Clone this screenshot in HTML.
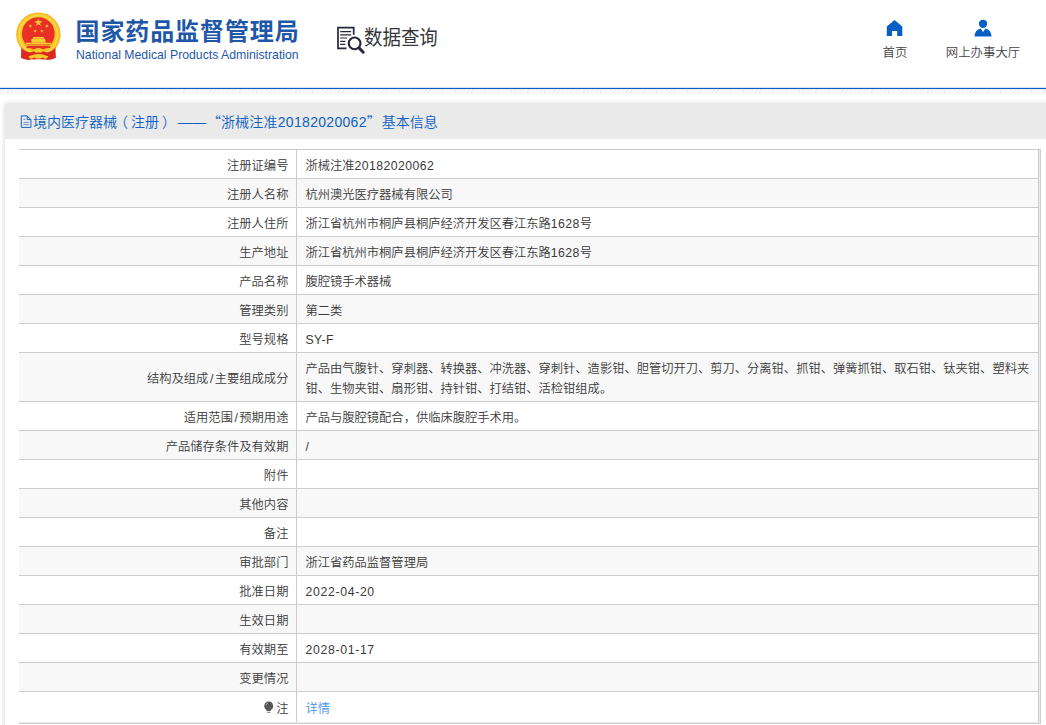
<!DOCTYPE html>
<html lang="zh-CN">
<head>
<meta charset="utf-8">
<title>国家药品监督管理局 数据查询</title>
<style>
*{box-sizing:border-box;margin:0;padding:0}
html,body{width:1046px;height:725px;overflow:hidden;background:#fff}
body{font-family:"Liberation Sans","Noto Sans CJK SC",sans-serif;font-size:12px;color:#333;position:relative}
.hdr{position:absolute;left:0;top:0;width:1046px;height:88px;background:#fff}
.emblem{position:absolute;left:14px;top:11px;width:48px;height:52px}
.cn{position:absolute;left:75.500px;top:13.500px;font-size:24px;line-height:36px;font-weight:700;color:#1f57a8;white-space:nowrap;letter-spacing:.9px}
.en{position:absolute;left:76px;top:47px;font-size:12.250px;line-height:16px;color:#1f57a8;white-space:nowrap}
.sq{position:absolute;left:336px;top:26px;width:30px;height:30px}
.sqt{position:absolute;left:364px;top:23.400px;font-size:20.400px;line-height:30px;color:#36363c;font-weight:400;white-space:nowrap;transform:scaleX(.905);transform-origin:0 0}
.nav{position:absolute;top:45px;font-size:12.4px;line-height:16px;color:#444;font-weight:350;white-space:nowrap;text-align:center}
.ico{position:absolute}
.bline{position:absolute;left:0;top:87px;width:1046px;height:3px;background:linear-gradient(#d3e1f3 0,#d3e1f3 1px,#0d5fbf 1px,#0d5fbf 2px,#e3ecf7 2px)}
.hatch{position:absolute;left:0;top:90px;width:1046px;height:3px;background:repeating-linear-gradient(135deg,#ebebeb 0,#ebebeb 1px,#fff 1px,#fff 3.040px)}
.panel{position:absolute;left:5px;top:104px;width:1060px;height:640px;background:#fff;box-shadow:0 0 5px rgba(0,0,0,.19)}
.ttl{position:absolute;left:0;top:0;width:100%;height:35px;background:#eaeaea;border-bottom:1px solid #e6e8f2;color:#0d5fc4;font-size:14px;font-weight:350;line-height:35px;padding-left:15px;white-space:nowrap}
.ttl .c{font-family:"Noto Sans CJK SC",sans-serif}
.ttl .n{letter-spacing:.3px}
.ttl svg{position:absolute;left:15px;top:10px}
.tw{position:absolute;left:14px;top:45px;width:1022px;height:575px;border-top:1px solid #ccc;border-right:1px solid #ccc;border-bottom:1px solid #ccc;padding:0 1px 1px 0;background:#e9e9f1}
table{width:1020px;border-collapse:separate;border-spacing:0;table-layout:fixed;background:#fff}
td{height:29px;border-right:1px solid #ccc;border-bottom:1px solid #ccc;font-size:12.27px;font-weight:350;line-height:20px;color:#3a3a3a;padding:6px 7px 2px 8.500px;vertical-align:middle;background:#fff}
td.k{width:278px;text-align:right;padding-right:7.600px}
tr:nth-child(even) td{background:#f8f8f8}
tr:last-child td{height:30px;border-bottom:0}
.n{letter-spacing:.42px}
.d{letter-spacing:.66px}
.sl{margin:0 1.500px}
a{color:#4593f0;text-decoration:none}
.bulb{position:absolute;left:245px;top:551px}
</style>
</head>
<body>
<div class="hdr">
  <svg class="emblem" viewBox="14 11 48 52">
<defs><radialGradient id="rg" cx="50%" cy="50%" r="50%"><stop offset="0.72" stop-color="#f3b411"/><stop offset="0.86" stop-color="#fbd84a"/><stop offset="1" stop-color="#f1b010"/></radialGradient></defs>
<path d="M22.5 46 L21 57.5 Q26 60.5 31 59 L34 52 Z" fill="#d9251d"/>
<path d="M54.3 46 L55.6 57.5 Q50.5 60.5 45.5 59 L42.6 52 Z" fill="#d9251d"/>
<circle cx="38.4" cy="34.6" r="22.2" fill="url(#rg)"/>
<circle cx="38.3" cy="33.6" r="16.3" fill="#ea2f27"/>
<g fill="#f7cf2e"><polygon points="38.40,18.30 39.41,21.21 42.49,21.27 40.04,23.13 40.93,26.08 38.40,24.32 35.87,26.08 36.76,23.13 34.31,21.27 37.39,21.21"/><polygon points="31.35,24.35 31.09,25.69 32.26,26.40 30.91,26.56 30.60,27.89 30.02,26.66 28.66,26.77 29.66,25.84 29.13,24.59 30.32,25.24"/><polygon points="45.85,24.35 46.88,25.24 48.07,24.59 47.54,25.84 48.54,26.77 47.18,26.66 46.60,27.89 46.29,26.56 44.94,26.40 46.11,25.69"/><polygon points="35.43,29.23 35.65,30.57 36.98,30.84 35.77,31.46 35.93,32.81 34.97,31.85 33.73,32.42 34.35,31.21 33.42,30.21 34.77,30.42"/><polygon points="41.57,29.23 42.23,30.42 43.58,30.21 42.65,31.21 43.27,32.42 42.03,31.85 41.07,32.81 41.23,31.46 40.02,30.84 41.35,30.57"/>
<path d="M33.2 37h10.400l.6 1.400h-11.600z M32 38.800h12.800l1 1.600h-14.800z M31.400 40.600h14v2h-14z M26.200 42.800h24.400l.6 1.500h-25.600z" /><path d="M25.800 44.600h25.200v1.200h-25.200z" fill="#f3b92a"/></g>
<rect x="26.500" y="46.300" width="23.800" height="1.800" fill="#e6322a"/>
<path d="M21.300 47.500 Q24 51 30 52.500 L36 50.500 L41 50.500 L47 52.500 Q53 51 55.400 47.500 L55.800 57.800 Q50.500 60.600 46 59.600 L38.400 59.200 L30.800 59.600 Q26 60.600 21 57.800 Z" fill="#dc2820"/>
<path d="M33.200 50.300 Q38.400 45.800 43.600 50.300 Q42 53.500 38.400 52.300 Q34.800 53.500 33.200 50.300Z" fill="#f6c92a"/>
<path d="M28.300 56.400 L34 54.600 Q38.400 53.400 42.800 54.600 L48.500 56.400 L46 59 L42.500 57.400 Q38.400 60 34.300 57.400 L30.800 59Z" fill="#f6c92a"/>
</svg>
  <div class="cn">国家药品监督管理局</div>
  <div class="en">National Medical Products Administration</div>
  <svg class="sq" viewBox="336 26 30 30" fill="none" stroke="#26263a">
<path d="M346.500 48.400H338V27.700h15.700v7" stroke-width="1.700"/>
<path d="M340.200 31.600h11M340.200 34.900h11M340.200 38h6.900M340.200 41.400h5.200M340.200 44.400h5.200" stroke-width="1.100"/>
<circle cx="354.600" cy="43.400" r="5.850" stroke-width="2.100" fill="#fff"/>
<path d="M358.900 47.800l4.300 4.400" stroke-width="3" stroke-linecap="round"/>
</svg>
  <div class="sqt">数据查询</div>
  <svg class="ico" style="left:884px;top:18px" width="22" height="20" viewBox="884 18 22 20"><path d="M894.600 20.100L902.300 26.500V35.900H897.200V31H892V35.900H886.800V26.500Z" fill="#0660c4"/></svg>
  <svg class="ico" style="left:972px;top:18px" width="22" height="20" viewBox="972 18 22 20" fill="#0660c4"><circle cx="983.050" cy="23.800" r="4.150"/><path d="M974.600 36.400C974.800 32 977 29.300 980.600 28.500L983.100 31.900L985.500 28.500C989.200 29.300 991.300 32 991.500 36.400Z"/></svg>
  <div class="nav" style="left:882px;width:26px">首页</div>
  <div class="nav" style="left:944px;width:78px">网上办事大厅</div>
</div>
<div class="bline"></div>
<div class="hatch"></div>
<div class="panel">
  <div class="ttl"><svg width="14" height="16" viewBox="20 114 14 16" fill="none" stroke="#0d62c8" stroke-width="1"><path d="M27.200 115.900H21.300V127.400H30.900V119.600L27.200 115.900V119.600H30.900"/><path d="M23.500 119.400h1.700M23.500 122.400h5.200M23.500 124.600h5.200" stroke-width="0.900" stroke="#4a86d6"/></svg><span id="t1" style="margin-left:13px">境内医疗器械<span style="position:relative;left:-3px">（</span>注册<span style="position:relative;left:3px">）</span></span> <span id="t2" style="margin-left:1px">——</span><span class="c" id="t3" style="margin-left:1px">“</span><span id="t4" style="letter-spacing:.22px">浙械注准</span><span class="n" id="t5">20182020062</span><span class="c" id="t6" style="margin-right:1px">”</span><span id="t7">基本信息</span></div>
  <div class="tw"><table>
    <tr><td class="k">注册证编号</td><td>浙械注准<span class="n">20182020062</span></td></tr>
    <tr><td class="k">注册人名称</td><td>杭州澳光医疗器械有限公司</td></tr>
    <tr><td class="k">注册人住所</td><td>浙江省杭州市桐庐县桐庐经济开发区春江东路<span class="n">1628</span>号</td></tr>
    <tr><td class="k">生产地址</td><td>浙江省杭州市桐庐县桐庐经济开发区春江东路<span class="n">1628</span>号</td></tr>
    <tr><td class="k">产品名称</td><td>腹腔镜手术器械</td></tr>
    <tr><td class="k">管理类别</td><td>第二类</td></tr>
    <tr><td class="k">型号规格</td><td><span class="n">SY-F</span></td></tr>
    <tr><td class="k">结构及组成<span class="sl">/</span>主要组成成分</td><td>产品由气腹针、穿刺器、转换器、冲洗器、穿刺针、造影钳、胆管切开刀、剪刀、分离钳、抓钳、弹簧抓钳、取石钳、钛夹钳、塑料夹钳、生物夹钳、扇形钳、持针钳、打结钳、活检钳组成。</td></tr>
    <tr><td class="k">适用范围<span class="sl">/</span>预期用途</td><td>产品与腹腔镜配合，供临床腹腔手术用。</td></tr>
    <tr><td class="k">产品储存条件及有效期</td><td>/</td></tr>
    <tr><td class="k">附件</td><td></td></tr>
    <tr><td class="k">其他内容</td><td></td></tr>
    <tr><td class="k">备注</td><td></td></tr>
    <tr><td class="k">审批部门</td><td>浙江省药品监督管理局</td></tr>
    <tr><td class="k">批准日期</td><td><span class="d">2022-04-20</span></td></tr>
    <tr><td class="k">生效日期</td><td></td></tr>
    <tr><td class="k">有效期至</td><td><span class="d">2028-01-17</span></td></tr>
    <tr><td class="k">变更情况</td><td></td></tr>
    <tr><td class="k"><svg class="bulb" width="10" height="12" viewBox="264 701 10 12"><path d="M268.700 701.600a4.400 4.400 0 0 1 2.500 8.050q-.5.500-.6 1.250h-3.800q-.1-.750-.6-1.250a4.400 4.400 0 0 1 2.500-8.050z" fill="#555"/><path d="M265.900 705.300a3 3 0 0 1 2-2.400" stroke="#ddd" stroke-width=".7" fill="none"/><path d="M267.100 712.300h3.300" stroke="#666" stroke-width=".9"/></svg>注</td><td><a>详情</a></td></tr>
  </table></div>
</div>
</body>
</html>
